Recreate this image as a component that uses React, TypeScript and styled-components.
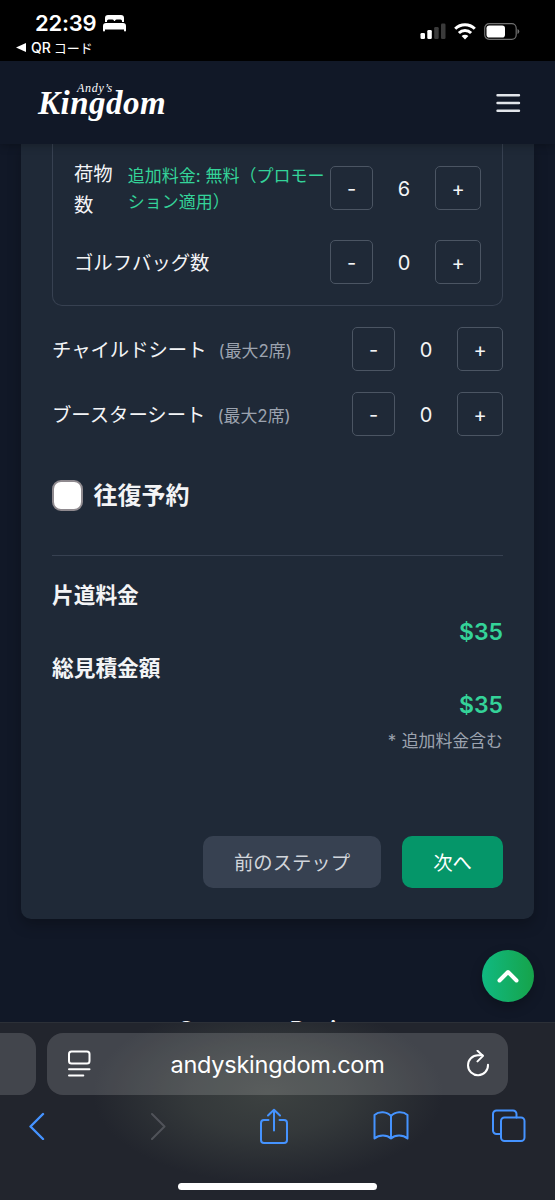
import React from 'react';
import styled, { createGlobalStyle } from 'styled-components';

const Global = createGlobalStyle`
  * { box-sizing: border-box; }
  html, body { margin: 0; padding: 0; background: #111827; }
  body { width: 555px; height: 1200px; overflow: hidden; }
  button { font: inherit; color: inherit; padding: 0; margin: 0; background: none; border: 0; }
`;

const Screen = styled.div`
  width: 555px;
  height: 1200px;
  display: flex;
  flex-direction: column;
  overflow: hidden;
  position: relative;
  background: #111827;
  color: #f3f4f6;
  font-family: Inter, "Noto Sans CJK JP", sans-serif;
`;

const StatusBar = styled.div`
  height: 61px;
  flex: none;
  background: #000;
  color: #fff;
  display: flex;
  justify-content: space-between;
`;
const StatusLeft = styled.div`
  padding: 10px 0 0 16px;
`;
const Clock = styled.div`
  display: flex;
  align-items: center;
  gap: 7px;
  height: 26px;
  padding-left: 19px;
  font-size: 22px;
  font-weight: 600;
  letter-spacing: -0.25px;
`;
const BackTo = styled.div`
  display: flex;
  align-items: center;
  gap: 5px;
  height: 23px;
  font-size: 14px;
  font-weight: 500;
  white-space: nowrap;
`;
const Kana = styled.span`
  font-size: 13px;
  font-weight: 400;
  margin-left: 3px;
`;
const StatusRight = styled.div`
  display: flex;
  padding: 23px 35px 0 0;
  gap: 8px;
`;

const Header = styled.header`
  height: 83px;
  flex: none;
  display: flex;
  justify-content: space-between;
  padding: 0 34px 0 38px;
  background: #111827;
  z-index: 1;
  box-shadow: 0 2px 8px rgba(0, 0, 0, 0.25);
`;
const Logo = styled.div`
  padding-top: 21px;
  font-family: "Liberation Serif", serif;
  font-style: italic;
  color: #fff;
`;
const LogoSmall = styled.div`
  height: 9px;
  line-height: 12px;
  font-size: 12px;
  letter-spacing: 0.7px;
  padding-left: 39px;
`;
const LogoBig = styled.div`
  font-size: 33px;
  line-height: 25px;
  font-weight: 700;
  letter-spacing: 0.5px;
`;
const MenuButton = styled.button`
  height: 83px;
  display: flex;
  align-items: center;
`;

const Card = styled.main`
  width: 513px;
  height: 775px;
  flex: none;
  margin-left: 21px;
  padding: 0 31px;
  background: #1f2937;
  border-radius: 0 0 10px 10px;
  box-shadow: 0 6px 14px rgba(0, 0, 0, 0.25);
`;
const Group = styled.section`
  height: 162px;
  border: 1px solid #374151;
  border-top: 0;
  border-radius: 0 0 10px 10px;
  padding: 22px 21px 0;
  display: flex;
  flex-direction: column;
  gap: 30px;
`;
const Extras = styled.section`
  padding-top: 21px;
  display: flex;
  flex-direction: column;
  gap: 21px;
`;
const Row = styled.div`
  height: 44px;
  display: flex;
  align-items: center;
  justify-content: space-between;
`;
const Label = styled.div`
  display: flex;
  align-items: center;
  padding-top: 3px;
  font-size: 19.35px;
  line-height: 31px;
  white-space: nowrap;
`;
const Hint = styled.span<{ $promo?: boolean }>`
  font-size: ${p => (p.$promo ? 17 : 16.9)}px;
  line-height: 26px;
  margin-left: ${p => (p.$promo ? 15 : 12)}px;
  padding-bottom: ${p => (p.$promo ? 2 : 0)}px;
  color: ${p => (p.$promo ? '#34d399' : '#9ca3af')};
`;
const Stepper = styled.div`
  display: flex;
  align-items: center;
  font-size: 20px;
  line-height: 24px;
  flex: none;
`;
const StepButton = styled.button<{ $w: number }>`
  width: ${p => p.$w}px;
  height: 44px;
  padding-top: 2px;
  border: 1px solid #4b5563;
  border-radius: 5px;
`;
const Count = styled.span`
  width: 62px;
  padding-top: 2px;
  text-align: center;
`;

const RoundTrip = styled.label`
  margin-top: 44px;
  height: 31px;
  display: flex;
  align-items: center;
  gap: 10px;
  font-size: 24px;
  line-height: 31px;
  font-weight: 600;
`;
const RoundTripText = styled.span`
  padding-left: 0.5px;
`;
const Box = styled.span`
  width: 31px;
  height: 31px;
  border-radius: 9px;
  border: 2px solid #8f8a8f;
  background: #fff;
`;
const Totals = styled.section`
  margin-top: 44px;
  border-top: 1px solid #374151;
  padding-top: 21px;
`;
const TotalName = styled.div`
  height: 37px;
  line-height: 37px;
  font-size: 21.7px;
  font-weight: 600;
`;
const Price = styled.div`
  height: 36px;
  line-height: 36px;
  font-size: 23px;
  font-weight: 600;
  text-align: right;
  color: #34d399;
`;
const Note = styled.div`
  height: 37px;
  line-height: 37px;
  font-size: 16.9px;
  text-align: right;
  word-spacing: 0.6px;
  color: #9ca3af;
`;
const Actions = styled.div`
  margin-top: 76px;
  display: flex;
  justify-content: flex-end;
  gap: 21px;
`;
const Action = styled.button<{ $primary?: boolean }>`
  width: ${p => (p.$primary ? 101 : 178)}px;
  height: 52px;
  border-radius: 10px;
  font-size: 19.35px;
  background: ${p => (p.$primary ? '#059669' : '#374151')};
  color: ${p => (p.$primary ? '#fff' : '#d1d5db')};
`;
const ReviewsTitle = styled.h2`
  margin: 96px 0 0 3px;
  line-height: 30px;
  font-size: 22.5px;
  font-weight: 600;
  text-align: center;
`;
const ScrollTop = styled.button`
  position: absolute;
  left: 482px;
  top: 950px;
  width: 52px;
  height: 52px;
  border-radius: 50%;
  display: flex;
  align-items: center;
  justify-content: center;
  background: linear-gradient(90deg, #10b981, #16a34a);
  box-shadow: 0 5px 12px rgba(0, 0, 0, 0.25);
`;

const BrowserBar = styled.footer`
  position: absolute;
  left: 0;
  right: 0;
  bottom: 0;
  height: 178px;
  display: flex;
  flex-direction: column;
  background:
    radial-gradient(ellipse 175px 90px at 268px 70px, rgba(62, 67, 66, 0.95), rgba(58, 63, 63, 0.75) 45%, rgba(40, 44, 50, 0) 100%),
    #22252d;
  border-top: 1px solid #2c3037;
`;
const Tabs = styled.div`
  display: flex;
  gap: 11px;
  padding-top: 10px;
`;
const PrevTab = styled.div`
  width: 36px;
  height: 62px;
  border-radius: 0 16px 16px 0;
  background: rgba(255, 255, 255, 0.15);
`;
const Address = styled.div`
  width: 461px;
  height: 62px;
  border-radius: 16px;
  padding: 0 18px 0 20px;
  display: flex;
  align-items: center;
  justify-content: space-between;
  background: rgba(255, 255, 255, 0.15);
  color: #fff;
  font-size: 23.5px;
`;
const Url = styled.span`
  letter-spacing: -0.25px;
  margin-right: 2px;
`;
const Tools = styled.nav`
  height: 62px;
  padding-left: 28px;
  display: flex;
  align-items: center;
`;
const Tool = styled.button<{ $gap?: number }>`
  display: flex;
  margin-left: ${p => p.$gap ?? 0}px;
`;
const HomeIndicator = styled.div`
  width: 199px;
  height: 7px;
  margin: 26px 0 0 178px;
  border-radius: 4px;
  background: #fff;
`;

const blue = { fill: 'none', stroke: '#4593ff', strokeWidth: 2, strokeLinecap: 'round', strokeLinejoin: 'round' } as const;

function Counter({ value }: { value: number }) {
  return (
    <Stepper>
      <StepButton $w={43}>-</StepButton>
      <Count>{value}</Count>
      <StepButton $w={46}>+</StepButton>
    </Stepper>
  );
}

export default function App() {
  return (
    <Screen>
      <Global />
      <StatusBar>
        <StatusLeft>
          <Clock>
            22:39
            <svg width="23" height="17" viewBox="0 0 23 17" fill="#fff">
              <path d="M2 7V3a3 3 0 0 1 3-3h13a3 3 0 0 1 3 3v4h-2V6a1.500 1.500 0 0 0-1.500-1.500h-4A1.500 1.500 0 0 0 12 6h-1a1.500 1.500 0 0 0-1.500-1.500h-4A1.500 1.500 0 0 0 4 6v1z" />
              <path d="M3 8h17a3 3 0 0 1 3 3v4.500a1 1 0 0 1-2 0V14.500H2v1a1 1 0 0 1-2 0V11a3 3 0 0 1 3-3z" />
            </svg>
          </Clock>
          <BackTo>
            <svg width="10" height="9" viewBox="0 0 10 9"><path d="M0 4.500 10 0v9z" fill="#fff" /></svg>
            <span>QR<Kana>コード</Kana></span>
          </BackTo>
        </StatusLeft>
        <StatusRight>
          <svg width="26" height="17" viewBox="0 0 26 17">
            <rect x="0.500" y="10" width="4.500" height="6" rx="1.300" fill="#fff" />
            <rect x="7.300" y="7" width="4.500" height="9" rx="1.300" fill="#fff" />
            <rect x="14.200" y="4" width="4.500" height="12" rx="1.300" fill="#3a3a3a" />
            <rect x="21" y="0.500" width="4.500" height="15.500" rx="1.300" fill="#3a3a3a" />
          </svg>
          <svg width="22" height="17" viewBox="0 0 22 17" fill="none" stroke="#fff" strokeWidth="3">
            <path d="M1.200 5.700a14 14 0 0 1 19.600 0" />
            <path d="M4.900 10a8.700 8.700 0 0 1 12.200 0" />
            <path d="M11 16.500 7.600 13a4.900 4.900 0 0 1 6.800 0z" fill="#fff" stroke="none" />
          </svg>
          <svg width="36" height="17" viewBox="0 0 36 17">
            <rect x="0.700" y="0.700" width="31.500" height="15.600" rx="4.500" fill="none" stroke="#707070" strokeWidth="1.200" />
            <rect x="2.500" y="2.500" width="18.500" height="12" rx="2.800" fill="#fff" />
            <path d="M33.500 6v5q1.800-.8 1.800-2.500T33.500 6z" fill="#707070" />
          </svg>
        </StatusRight>
      </StatusBar>

      <Header>
        <Logo>
          <LogoSmall>Andy’s</LogoSmall>
          <LogoBig>Kingdom</LogoBig>
        </Logo>
        <MenuButton aria-label="menu">
          <svg width="25" height="20" viewBox="0 0 25 20" stroke="#e2e5ea" strokeWidth="2.400" strokeLinecap="round">
            <path d="M1.500 2.300h21.500M1.500 10h21.500M1.500 17.800h21.500" />
          </svg>
        </MenuButton>
      </Header>

      <Card>
        <Group>
          <Row>
            <Label>
              <span>荷物<br />数</span>
              <Hint $promo>追加料金: 無料（プロモー<br />ション適用）</Hint>
            </Label>
            <Counter value={6} />
          </Row>
          <Row>
            <Label>ゴルフバッグ数</Label>
            <Counter value={0} />
          </Row>
        </Group>
        <Extras>
          <Row>
            <Label>チャイルドシート<Hint>(最大2席)</Hint></Label>
            <Counter value={0} />
          </Row>
          <Row>
            <Label>ブースターシート<Hint>(最大2席)</Hint></Label>
            <Counter value={0} />
          </Row>
        </Extras>
        <RoundTrip><Box /><RoundTripText>往復予約</RoundTripText></RoundTrip>
        <Totals>
          <TotalName>片道料金</TotalName>
          <Price>$35</Price>
          <TotalName>総見積金額</TotalName>
          <Price>$35</Price>
          <Note>* 追加料金含む</Note>
        </Totals>
        <Actions>
          <Action>前のステップ</Action>
          <Action $primary>次へ</Action>
        </Actions>
      </Card>
      <ReviewsTitle>Customer Reviews</ReviewsTitle>

      <ScrollTop aria-label="top">
        <svg width="22" height="14" viewBox="0 0 22 14" fill="none" stroke="#fff" strokeWidth="4" strokeLinecap="round" strokeLinejoin="round">
          <path d="M2.500 11.500 11 3l8.500 8.500" />
        </svg>
      </ScrollTop>

      <BrowserBar>
        <Tabs>
          <PrevTab />
          <Address>
            <svg width="24" height="28" viewBox="0 0 24 28" fill="none" stroke="#fff" strokeWidth="2" strokeLinecap="round">
              <rect x="2" y="1.500" width="20.500" height="12" rx="2.500" />
              <path d="M2 19.200h20.500M2 25.500h14.300" />
            </svg>
            <Url>andyskingdom.com</Url>
            <svg width="24" height="28" viewBox="0 0 24 28" fill="none" stroke="#fff" strokeWidth="2" strokeLinecap="round" strokeLinejoin="round">
              <path d="M22 14.700A10 10 0 1 1 12 5.200h4.500" />
              <path d="M11.500 .8 17 5.900l-5.500 5.500" />
            </svg>
          </Address>
        </Tabs>
        <Tools>
          <Tool aria-label="back">
            <svg width="18" height="28" viewBox="0 0 18 28" {...blue} strokeWidth={2.4}><path d="M15 2 2.500 14.500 15 27" /></svg>
          </Tool>
          <Tool $gap={103} aria-label="forward">
            <svg width="18" height="28" viewBox="0 0 18 28" {...blue} stroke="#505359"><path d="M3 2 15.500 14.500 3 27" /></svg>
          </Tool>
          <Tool $gap={92} aria-label="share">
            <svg width="30" height="36" viewBox="0 0 30 36" {...blue}>
              <path d="M9.500 12H5a3 3 0 0 0-3 3v17a3 3 0 0 0 3 3h20a3 3 0 0 0 3-3V15a3 3 0 0 0-3-3h-4.500" />
              <path d="M15 22.500V2M9 7.500 15 1.800l6 5.700" />
            </svg>
          </Tool>
          <Tool $gap={84} aria-label="bookmarks">
            <svg width="36" height="32" viewBox="0 0 36 32" {...blue}>
              <path d="M18 6C14 1.500 6 1 1.500 5v23.500c4.500-4 12.500-4 16.500 0 4-4 12-4 16.500 0V5C30 1 22 1.500 18 6zM18 6v22.500" />
            </svg>
          </Tool>
          <Tool $gap={83} aria-label="tabs">
            <svg width="34" height="34" viewBox="0 0 34 34" {...blue}>
              <rect x="9" y="8.500" width="23.500" height="23.500" rx="3.500" />
              <path d="M9 25H4.500A3.500 3.500 0 0 1 1 21.500V5a3.500 3.500 0 0 1 3.500-3.500h16.500A3.500 3.500 0 0 1 24.500 5v3.500" />
            </svg>
          </Tool>
        </Tools>
        <HomeIndicator />
      </BrowserBar>
    </Screen>
  );
}
